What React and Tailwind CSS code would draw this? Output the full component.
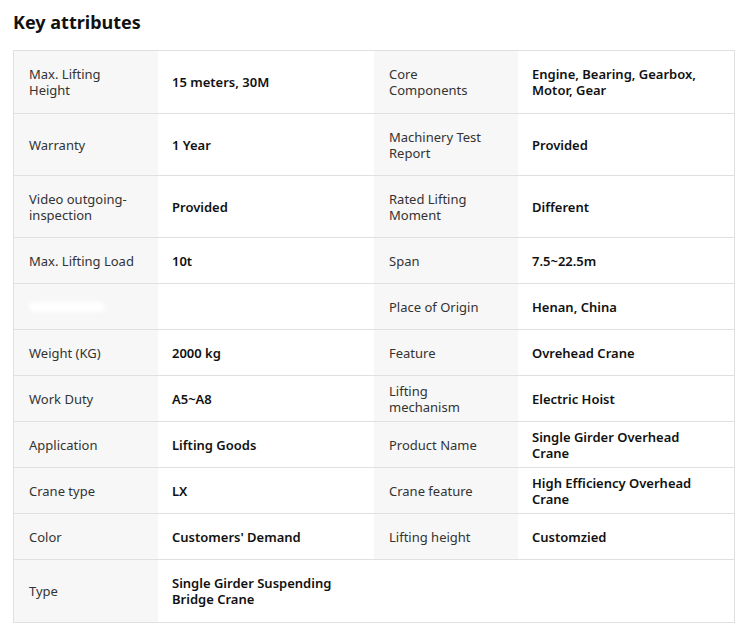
import React from 'react';

const rows = [
  ['Max. Lifting Height', '15 meters, 30M', 'Core Components', 'Engine, Bearing, Gearbox, Motor, Gear', 'h-[62px]'],
  ['Warranty', '1 Year', 'Machinery Test Report', 'Provided', 'h-[62px]'],
  ['Video outgoing-inspection', 'Provided', 'Rated Lifting Moment', 'Different', 'h-[62px]'],
  ['Max. Lifting Load', '10t', 'Span', '7.5~22.5m', 'h-[46px]'],
  [null, '', 'Place of Origin', 'Henan, China', 'h-[46px]'],
  ['Weight (KG)', '2000 kg', 'Feature', 'Ovrehead Crane', 'h-[46px]'],
  ['Work Duty', 'A5~A8', 'Lifting mechanism', 'Electric Hoist', 'h-[46px]'],
  ['Application', 'Lifting Goods', 'Product Name', 'Single Girder Overhead Crane', 'h-[46px]'],
  ['Crane type', 'LX', 'Crane feature', 'High Efficiency Overhead Crane', 'h-[46px]'],
  ['Color', "Customers' Demand", 'Lifting height', 'Customzied', 'h-[46px]'],
  ['Type', 'Single Girder Suspending Bridge Crane', null, null, 'h-[63px]'],
];

const Label = ({ children }) => (
  <div className="bg-[#f7f7f7] px-[15px] flex items-center text-[13px] leading-[16px] text-[#333]">
    {children}
  </div>
);
const Value = ({ children }) => (
  <div className="bg-white px-[14px] flex items-center text-[13px] leading-[16px] font-semibold text-[#111]">
    {children}
  </div>
);

export default function App() {
  return (
    <div className="bg-white w-[752px] h-[636px] font-['Inter',sans-serif]">
      <h2 className="text-[18px] font-bold text-[#111] pl-[13px] pt-[9px] h-[50px]">Key attributes</h2>
      <div className="mx-[13px] w-[722px] border border-[#e0e0e0]">
        {rows.map(([l1, v1, l2, v2, h], i) => (
          <div key={i} className={`grid grid-cols-[144px_216px_144px_1fr] ${h} ${i ? 'border-t border-[#e0e0e0]' : ''}`}>
            <Label>
              {l1 === null ? <span className="block w-[76px] h-[10px] bg-white rounded-full blur-[2px]" /> : l1}
            </Label>
            <Value><span className="max-w-[160px]">{v1}</span></Value>
            {l2 === null ? (
              <div className="col-span-2 bg-white" />
            ) : (
              <>
                <Label><span className="max-w-[100px]">{l2}</span></Label>
                <Value><span className="max-w-[170px]">{v2}</span></Value>
              </>
            )}
          </div>
        ))}
      </div>
    </div>
  );
}
